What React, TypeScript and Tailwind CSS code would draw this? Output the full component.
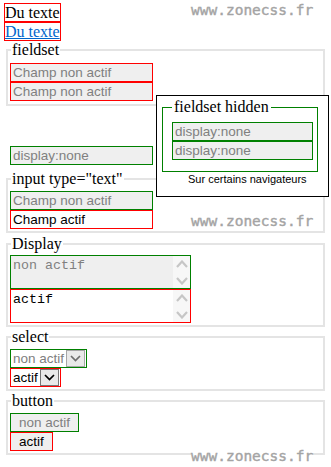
import React from "react";

const SANS = "font-['Liberation_Sans',Arial,sans-serif]";

function Chevron({ up = false, color, w = 10, h = 7, sw = 1.8 }: { up?: boolean; color: string; w?: number; h?: number; sw?: number }) {
  return (
    <svg width={w} height={h} viewBox={`0 0 ${w} ${h}`} className="block">
      <polyline
        points={up ? `1,${h - 1} ${w / 2},1.5 ${w - 1},${h - 1}` : `1,1 ${w / 2},${h - 1.5} ${w - 1},1`}
        fill="none"
        stroke={color}
        strokeWidth={sw}
      />
    </svg>
  );
}

function TextField({
  text,
  tone,
  disabled,
  w = "w-[143px]",
}: {
  text: string;
  tone: "red" | "green";
  disabled?: boolean;
  w?: string;
}) {
  const border = tone === "red" ? "border-[#ff0000]" : "border-[#008000]";
  const look = disabled ? "bg-[#efefef] text-[#808080]" : "bg-white text-black";
  return (
    <div
      className={`${w} h-[19px] border ${border} ${look} ${SANS} text-[13.5px] leading-[17px] px-[2px] whitespace-nowrap overflow-hidden`}
    >
      {text}
    </div>
  );
}

function Area({ text, tone, disabled }: { text: string; tone: "red" | "green"; disabled?: boolean }) {
  const border = tone === "red" ? "border-[#ff0000]" : "border-[#008000]";
  const look = disabled ? "bg-[#efefef] text-[#808080]" : "bg-white text-black";
  return (
    <div className={`w-[181px] h-[34px] border ${border} ${look} flex`}>
      <div className="flex-1 font-['Liberation_Mono','Courier_New',monospace] text-[13.33px] leading-[15px] pt-[2px] pl-[2px]">
        {text}
      </div>
      <div className="w-[17px] bg-[#f7f7f7] flex flex-col items-center justify-between pt-[4px] pb-[3px]">
        <Chevron up color="#c6c6c6" w={12} h={8} sw={2.2} />
        <Chevron color="#c6c6c6" w={12} h={8} sw={2.2} />
      </div>
    </div>
  );
}

function Select({ text, tone, disabled }: { text: string; tone: "red" | "green"; disabled?: boolean }) {
  const border = tone === "red" ? "border-[#ff0000]" : "border-[#008000]";
  const txt = disabled ? "text-[#808080]" : "text-black";
  const btn = disabled ? "border-[#a6a6a6] bg-[#e9e9e9]" : "border-[#767676] bg-[#e9e9e9]";
  return (
    <div className={`w-fit h-[19px] border ${border} bg-white flex items-center pl-[2px] pr-[1px]`}>
      <span className={`${SANS} text-[13.5px] leading-[17px] ${txt} whitespace-nowrap`}>{text}</span>
      <span className={`ml-[2px] w-[19px] h-[17px] border ${btn} flex items-center justify-center`}>
        <Chevron color={disabled ? "#6d6d6d" : "#000000"} w={11} h={7} sw={1.7} />
      </span>
    </div>
  );
}

function Btn({ text, tone, disabled }: { text: string; tone: "red" | "green"; disabled?: boolean }) {
  const border = tone === "red" ? "border-[#ff0000]" : "border-[#008000]";
  const txt = disabled ? "text-[#808080]" : "text-black";
  return (
    <div
      className={`w-fit h-[19px] border ${border} bg-[#efefef] ${txt} ${SANS} text-[13.5px] leading-[17px] px-[8px]`}
    >
      {text}
    </div>
  );
}

function Watermark({ top }: { top: string }) {
  return (
    <div
      className={`absolute left-[191px] ${top} bg-white font-['DejaVu_Sans_Mono',monospace] text-[14.5px] leading-[16px] text-[#a4a4a4] [-webkit-text-stroke:0.4px_#a4a4a4]`}
    >
      www.zonecss.fr
    </div>
  );
}

export default function App() {
  return (
    <div className="relative w-[331px] h-[467px] bg-white overflow-hidden px-[4px] pt-[3px] font-['Liberation_Serif','Times_New_Roman',serif] text-[16px] text-black">
      <div className="w-fit h-[19px] border border-[#ff0000] leading-[17px]">Du texte</div>
      <a href="#" className="block w-fit h-[19px] border border-[#ff0000] leading-[17px] text-[#0066cc] underline">
        Du texte
      </a>

      <fieldset className="mx-[2px] border-2 border-[#e4e4e4] pl-[2px] pt-[4px] pb-[3px]">
        <legend className="ml-[1px] px-[1px] leading-[18px]">fieldset</legend>
        <TextField text="Champ non actif" tone="red" disabled />
        <TextField text="Champ non actif" tone="red" disabled />
      </fieldset>

      <div className="ml-[6px] mt-[40px]">
        <TextField text="display:none" tone="green" disabled />
      </div>

      <fieldset className="mt-[5px] mx-[2px] border-2 border-[#e4e4e4] pl-[2px] pt-[3px] pb-[2px]">
        <legend className="ml-[1px] px-[1px] leading-[18px]">input type="text"</legend>
        <TextField text="Champ non actif" tone="green" disabled />
        <TextField text="Champ actif" tone="red" />
      </fieldset>

      <fieldset className="mt-[2px] mx-[2px] border-2 border-[#e4e4e4] pl-[2px] pt-[2px] pb-[2px]">
        <legend className="ml-[1px] px-[1px] leading-[18px]">Display</legend>
        <Area text="non actif" tone="green" disabled />
        <Area text="actif" tone="red" />
      </fieldset>

      <fieldset className="mt-[1px] mx-[2px] border-2 border-[#e4e4e4] pl-[2px] pt-[3px] pb-[2px]">
        <legend className="ml-[1px] px-[1px] leading-[18px]">select</legend>
        <Select text="non actif" tone="green" disabled />
        <Select text="actif" tone="red" />
      </fieldset>

      <fieldset className="mt-[1px] mx-[2px] border-2 border-[#e4e4e4] pl-[2px] pt-[3px] pb-[2px]">
        <legend className="ml-[1px] px-[1px] leading-[18px]">button</legend>
        <Btn text="non actif" tone="green" disabled />
        <Btn text="actif" tone="red" />
      </fieldset>

      <div className="absolute left-[156px] top-[95px] w-[173px] h-[102px] border border-black bg-white pl-[5px] pr-[10px] pt-[2px]">
        <fieldset className="border border-[#008000] pl-[9px] pt-[6px] pb-[11px]">
          <legend className="px-[2px] leading-[18px]">fieldset hidden</legend>
          <TextField text="display:none" tone="green" disabled w="w-[141px]" />
          <TextField text="display:none" tone="green" disabled w="w-[141px]" />
        </fieldset>
        <div className={`${SANS} text-[11px] leading-[13px] pl-[26px] pt-[1px]`}>Sur certains navigateurs</div>
      </div>

      <Watermark top="top-[2px]" />
      <Watermark top="top-[213px]" />
      <Watermark top="top-[448px]" />
    </div>
  );
}
